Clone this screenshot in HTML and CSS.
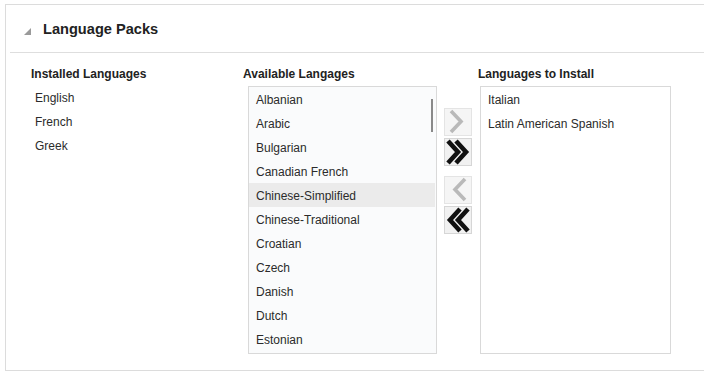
FILE: index.html
```html
<!DOCTYPE html>
<html>
<head>
<meta charset="utf-8">
<link rel="stylesheet" href="styles.css">
</head>
<body>
<div class="panel">
  <div class="header">
    <span class="disclosure"></span>
    <h1 class="title">Language Packs</h1>
  </div>
  <div class="content">
    <div class="heading">Installed Languages</div>
    <div class="heading">Available Langages</div>
    <div></div>
    <div class="heading">Languages to Install</div>

    <ul class="plain-list">
      <li>English</li>
      <li>French</li>
      <li>Greek</li>
    </ul>
    <div class="box box-available">
      <ul class="box-list">
        <li>Albanian</li>
        <li>Arabic</li>
        <li>Bulgarian</li>
        <li>Canadian French</li>
        <li class="selected">Chinese-Simplified</li>
        <li>Chinese-Traditional</li>
        <li>Croatian</li>
        <li>Czech</li>
        <li>Danish</li>
        <li>Dutch</li>
        <li>Estonian</li>
      </ul>
      <span class="scroll-thumb"></span>
    </div>
    <div class="shuttle">
      <button class="btn btn-disabled" aria-label="Move">
        <svg width="26" height="26" viewBox="0 0 26 26"><polyline points="6,2 16,12.5 6,23" fill="none" stroke="#b9b9b9" stroke-width="3.6"/></svg>
      </button>
      <button class="btn" aria-label="Move all">
        <svg width="26" height="26" viewBox="0 0 26 26"><polyline points="3,2 13,13 3,24" fill="none" stroke="#111" stroke-width="4.6"/><polyline points="11,2 21,13 11,24" fill="none" stroke="#111" stroke-width="4.6"/></svg>
      </button>
      <button class="btn btn-disabled btn-gap" aria-label="Remove">
        <svg width="26" height="26" viewBox="0 0 26 26"><polyline points="20,2 10,12.5 20,23" fill="none" stroke="#b9b9b9" stroke-width="3.6"/></svg>
      </button>
      <button class="btn" aria-label="Remove all">
        <svg width="26" height="26" viewBox="0 0 26 26"><polyline points="15,2 5,13 15,24" fill="none" stroke="#111" stroke-width="4.6"/><polyline points="23,2 13,13 23,24" fill="none" stroke="#111" stroke-width="4.6"/></svg>
      </button>
    </div>
    <div class="box box-install">
      <ul class="box-list">
        <li>Italian</li>
        <li>Latin American Spanish</li>
      </ul>
    </div>
  </div>
</div>
</body>
</html>
```

FILE: styles.css
```css
html, body {
  margin: 0;
  padding: 0;
  background: #ffffff;
  overflow: hidden;
}

body {
  font-family: "Liberation Sans", Arial, sans-serif;
  color: #2b2b2b;
  font-size: 12px;
}

.panel {
  margin: 4px 0 0 5px;
  width: 720px;
  height: 367px;
  border: 1px solid #dcdcdc;
  box-sizing: border-box;
}

.header {
  display: flex;
  align-items: center;
  height: 48px;
  margin-left: 4px;
  border-bottom: 1px solid #dedede;
  box-sizing: border-box;
}

.disclosure {
  width: 0;
  height: 0;
  margin-left: 14px;
  margin-top: 5px;
  border-style: solid;
  border-width: 0 0 7px 7px;
  border-color: transparent transparent #9a9a9a transparent;
}

.title {
  margin: 0 0 0 12px;
  font-size: 14.6px;
  font-weight: bold;
  color: #222;
}

.content {
  display: grid;
  grid-template-columns: 212px 194px 41px 200px;
  grid-template-rows: 18px auto;
  padding: 12px 0 0 25px;
}

.heading {
  font-weight: bold;
  font-size: 12px;
  line-height: 18px;
  color: #222;
}

.plain-list {
  list-style: none;
  margin: 2px 0 0 0;
  padding: 0 0 0 4px;
}

.plain-list li,
.box-list li {
  height: 24px;
  padding-top: 2px;
  line-height: 22px;
  box-sizing: border-box;
  white-space: nowrap;
}

.box {
  position: relative;
  height: 268px;
  margin-top: 3px;
  border: 1px solid #d9d9d9;
  box-sizing: border-box;
  overflow: hidden;
}

.box-available {
  margin-left: 5px;
  width: 189px;
  background: #fafbfc;
}

.box-install {
  margin-left: 2px;
  width: 191px;
  background: #ffffff;
}

.box-list {
  list-style: none;
  margin: 0;
  padding: 0;
}

.box-list li {
  padding-left: 7px;
}

.box-available .box-list li {
  margin-right: 1px;
}

.box-list li.selected {
  background: #ebebeb;
}

.scroll-thumb {
  position: absolute;
  top: 12px;
  right: 3px;
  width: 2px;
  height: 33px;
  background: #8a8a8a;
}

.shuttle {
  display: flex;
  flex-direction: column;
  margin: 25px 0 0 7px;
}

.btn {
  display: flex;
  align-items: center;
  justify-content: center;
  width: 28px;
  height: 28px;
  padding: 0;
  margin: 0 0 2px 0;
  border: 1px solid #d6d6d6;
  background: #f1f1f1;
  box-sizing: border-box;
}

.btn-disabled {
  border-color: #e4e4e4;
  background: #f5f5f5;
}

.btn-gap {
  margin-top: 8px;
}
```
